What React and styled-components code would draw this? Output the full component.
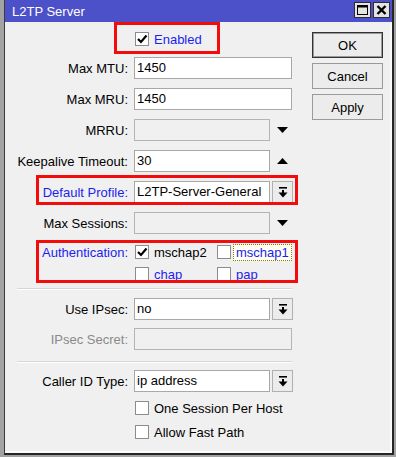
import styled, { createGlobalStyle } from 'styled-components';

const GlobalStyle = createGlobalStyle`
  html, body {
    margin: 0;
    padding: 0;
    background: #a3a3a3;
  }
  body {
    font-family: "Liberation Sans", Arial, sans-serif;
    font-size: 13px;
    color: #000;
    overflow: hidden;
  }
`;

const DropIcon = () => (
  <svg width="10" height="11" viewBox="0 0 10 11">
    <rect x="1" y="0" width="8" height="1.6" fill="#000" />
    <rect x="4" y="3" width="2" height="3" fill="#000" />
    <polygon points="0.5,5.5 9.5,5.5 5,10.5" fill="#000" />
  </svg>
);

const Triangle = ({ up }) => (
  <svg width="11" height="6" viewBox="0 0 11 6">
    {up ? <polygon points="0,6 11,6 5.5,0" fill="#000" /> : <polygon points="0,0 11,0 5.5,6" fill="#000" />}
  </svg>
);

const Tick = () => (
  <svg width="12" height="12" viewBox="0 0 12 12">
    <polyline points="2,6 5,9 10.5,2.5" fill="none" stroke="#000" strokeWidth="2.2" />
  </svg>
);

const Check = ({ checked, children, focus, blue }) => (
  <CheckItem>
    <Box>{checked && <Tick />}</Box>
    {focus ? <FocusText>{children}</FocusText> : <CheckText $blue={blue}>{children}</CheckText>}
  </CheckItem>
);

const App = () => {
  return (
    <>
      <GlobalStyle />
      <Window>
        <TitleBar>
          <Title>L2TP Server</Title>
          <TitleButtons>
            <TitleButton>
              <svg width="11" height="10" viewBox="0 0 11 10">
                <rect x="0.5" y="0.5" width="10" height="9" fill="none" stroke="#000" />
                <rect x="0.5" y="0.5" width="10" height="2" fill="#000" />
              </svg>
            </TitleButton>
            <TitleButton>
              <svg width="11" height="10" viewBox="0 0 11 10">
                <path d="M1.5 1 L9.5 9 M9.5 1 L1.5 9" stroke="#000" strokeWidth="2.4" />
              </svg>
            </TitleButton>
          </TitleButtons>
        </TitleBar>

        <Content>
          <Form>
            <Row $gap={0}>
              <span />
              <Marked $inset="-10px 85px -6px -20px">
                <Check checked blue>Enabled</Check>
              </Marked>
            </Row>

            <Row $gap={6}>
              <Label>Max MTU:</Label>
              <Field $w={158}>1450</Field>
            </Row>
            <Row>
              <Label>Max MRU:</Label>
              <Field $w={158}>1450</Field>
            </Row>
            <Row>
              <Label>MRRU:</Label>
              <Controls>
                <Field $w={136} disabled />
                <Spin><Triangle /></Spin>
              </Controls>
            </Row>
            <Row>
              <Label>Keepalive Timeout:</Label>
              <Controls>
                <Field $w={136}>30</Field>
                <Spin><Triangle up /></Spin>
              </Controls>
            </Row>

            <Marked $inset="-6px 7px -2px 31px" $gap={9}>
              <Row $gap={0}>
                <Label $tone="blue">Default Profile:</Label>
                <Controls>
                  <Field $w={136}>L2TP-Server-General</Field>
                  <DropButton><DropIcon /></DropButton>
                </Controls>
              </Row>
            </Marked>

            <Row>
              <Label>Max Sessions:</Label>
              <Controls>
                <Field $w={136} disabled />
                <Spin><Triangle /></Spin>
              </Controls>
            </Row>

            <Marked $inset="-1px 7px 2px 31px" $gap={7}>
              <Row $gap={0}>
                <Label $tone="blue">Authentication:</Label>
                <CheckGrid>
                  <Check checked>mschap2</Check>
                  <Check focus>mschap1</Check>
                </CheckGrid>
              </Row>
              <Row $gap={0}>
                <span />
                <CheckGrid>
                  <Check blue>chap</Check>
                  <Check blue>pap</Check>
                </CheckGrid>
              </Row>
            </Marked>

            <Separator $gap={3} />

            <Row $gap={8}>
              <Label>Use IPsec:</Label>
              <Controls>
                <Field $w={136}>no</Field>
                <DropButton><DropIcon /></DropButton>
              </Controls>
            </Row>
            <Row $gap={8}>
              <Label $tone="muted">IPsec Secret:</Label>
              <Field $w={158} disabled />
            </Row>

            <Separator $gap={11} />

            <Row $gap={7}>
              <Label>Caller ID Type:</Label>
              <Controls>
                <Field $w={136}>ip address</Field>
                <DropButton><DropIcon /></DropButton>
              </Controls>
            </Row>
            <Row $gap={5}>
              <span />
              <Check>One Session Per Host</Check>
            </Row>
            <Row $gap={2}>
              <span />
              <Check>Allow Fast Path</Check>
            </Row>
          </Form>

          <Side>
            <Button $primary>OK</Button>
            <Button>Cancel</Button>
            <Button>Apply</Button>
          </Side>
        </Content>
      </Window>
    </>
  );
};

export default App;

const Window = styled.div`
  margin-left: 4px;
  width: 390px;
  height: 455px;
  box-sizing: border-box;
  background: #f0f0f0;
  border-left: 1px solid #3a3a3a;
  border-right: 2px solid #262626;
  border-bottom: 2px solid #262626;
  box-shadow: inset -2px -2px 0 #fbfbfb;
  display: flex;
  flex-direction: column;
`;

const TitleBar = styled.div`
  height: 22px;
  background: #4c50c9;
  display: flex;
  align-items: center;
  justify-content: space-between;
  padding-left: 7px;
  padding-right: 2px;
  flex-shrink: 0;
`;

const Title = styled.span`
  color: #fff;
  font-size: 13px;
`;

const TitleButtons = styled.div`
  display: flex;
  gap: 2px;
  margin-top: -3px;
`;

const TitleButton = styled.div`
  width: 17px;
  height: 16px;
  box-sizing: border-box;
  background: #e4e4e4;
  border: 1px solid #2e2e2e;
  display: flex;
  align-items: center;
  justify-content: center;
`;

const Content = styled.div`
  display: flex;
  flex: 1;
`;

const Form = styled.div`
  width: 300px;
  padding-top: 7px;
  display: flex;
  flex-direction: column;
`;

const Row = styled.div`
  display: grid;
  grid-template-columns: 123px 1fr;
  column-gap: 6px;
  align-items: center;
  height: 22px;
  margin-top: ${p => (p.$gap ?? 9)}px;
`;

const Label = styled.span`
  text-align: right;
  white-space: nowrap;
  color: ${p => (p.$tone === 'blue' ? '#1d1df0' : p.$tone === 'muted' ? '#8a8a8a' : '#000')};
`;

const Controls = styled.div`
  display: flex;
  align-items: center;
  gap: 1px;
`;

const Field = styled.div`
  width: ${p => p.$w}px;
  height: 22px;
  box-sizing: border-box;
  border: 1px solid ${p => (p.disabled ? '#b4b4b4' : '#a8a8a8')};
  background: ${p => (p.disabled ? '#f0f0f0' : '#fff')};
  padding-left: 2px;
  line-height: 20px;
  white-space: nowrap;
  overflow: hidden;
`;

const Spin = styled.div`
  width: 22px;
  height: 22px;
  display: flex;
  align-items: center;
  justify-content: center;
`;

const DropButton = styled.div`
  width: 21px;
  height: 22px;
  box-sizing: border-box;
  margin-left: 1px;
  border: 1px solid #b0b0b0;
  background: #ececec;
  display: flex;
  align-items: center;
  justify-content: center;
`;

const Marked = styled.div`
  position: relative;
  margin-top: ${p => (p.$gap ?? 0)}px;
  &::after {
    content: '';
    position: absolute;
    inset: ${p => p.$inset};
    border: 3px solid #f20c0c;
    pointer-events: none;
  }
`;

const CheckGrid = styled.div`
  display: grid;
  grid-template-columns: 82px auto;
  align-items: center;
`;

const CheckItem = styled.div`
  display: inline-flex;
  align-items: center;
  gap: 5px;
  padding-left: 1px;
`;

const Box = styled.span`
  width: 14px;
  height: 14px;
  box-sizing: border-box;
  border: 1px solid #8c8c8c;
  background: #fff;
  display: flex;
  align-items: center;
  justify-content: center;
`;

const CheckText = styled.span`
  color: ${p => (p.$blue ? '#1d1df0' : '#000')};
  white-space: nowrap;
`;

const FocusText = styled.span`
  color: #1d1df0;
  margin-left: -3px;
  padding: 0 2px;
  line-height: 15px;
  border: 1px dotted #8a7d00;
  background: #fffff4;
`;

const Separator = styled.div`
  margin: ${p => p.$gap}px 13px 0 12px;
  height: 1px;
  border-top: 1px solid #d6d6d6;
  background: #fff;
`;

const Side = styled.div`
  display: flex;
  flex-direction: column;
  gap: 5px;
  padding-top: 10px;
  padding-left: 7px;
`;

const Button = styled.div`
  width: 71px;
  height: 26px;
  box-sizing: border-box;
  border: 1px solid ${p => (p.$primary ? '#333' : '#9a9a9a')};
  box-shadow: ${p => (p.$primary ? 'inset 0 0 0 1px #9a9a9a' : 'none')};
  background: #ececec;
  display: flex;
  align-items: center;
  justify-content: center;
  font-size: 13px;
`;
